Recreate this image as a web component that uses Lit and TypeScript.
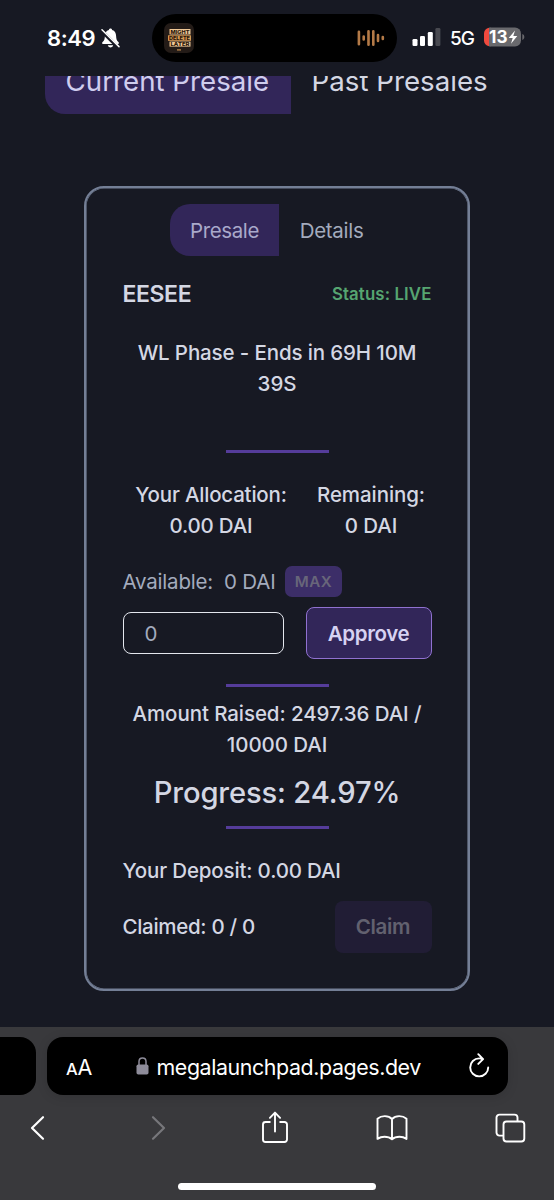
import { LitElement, html, css } from "lit";
import { customElement, property } from "lit/decorators.js";

@customElement("status-bar")
class StatusBar extends LitElement {
  static styles = css`
    :host { display: block; height: 76px; flex: none; color: #fff; }
    .bar { display: flex; height: 76px; padding: 0 29px 0 47px; box-sizing: border-box; }
    .time { width: 54px; padding-top: 24px; font-size: 22px; line-height: 28px; font-weight: 600; letter-spacing: -0.45px; white-space: nowrap; }
    .bell { margin-top: 28px; width: 19px; height: 20px; flex: none; }
    .island { margin: 14px 0 0 32px; width: 245px; height: 48px; border-radius: 24px; background: #000; display: flex; justify-content: space-between; align-items: center; padding: 0 12px; box-sizing: border-box; flex: none; }
    .signal { margin: 28px 0 0 15px; width: 29px; height: 18px; flex: none; }
    .net { margin: 24px 0 0 9px; width: 34px; font-size: 19px; line-height: 29px; font-weight: 500; letter-spacing: -0.9px; flex: none; }
    .battery { margin-top: 27px; width: 41px; height: 20px; flex: none; }
    svg { display: block; }
    .num { font: 700 17.500px Inter, sans-serif; }
    .art { font: 800 5.200px "Inter", sans-serif; }
  `;
  render() {
    return html`<div class="bar">
      <div class="time">8:49</div>
      <svg class="bell" viewBox="0 0 19 20">
        <path d="M9.5.6c-.9 0-1.500.6-1.600 1.300C5 2.700 4 5 3.900 8c-.1 3.300-.7 4.500-2.300 6-.9.9-.7 2 .5 2h14.800c1.200 0 1.400-1.100.5-2-1.600-1.500-2.200-2.700-2.300-6C15 5 14 2.700 11.100 1.900 11 1.200 10.400.6 9.500.6zM6.800 17.200c.3 1.400 1.400 2.200 2.700 2.200s2.400-.8 2.700-2.200z" fill="#fff"/>
        <path d="M0 2.200 17.200 19.400" stroke="#171923" stroke-width="3.600"/>
        <path d="M1 1.800 18 18.600" stroke="#fff" stroke-width="1.500" stroke-linecap="round"/>
      </svg>
      <div class="island">
        <svg width="30" height="30" viewBox="0 0 30 30">
          <rect width="30" height="30" rx="7" fill="#231b17"/>
          <g fill="#f0c896"><rect x="5.500" y="6" width="21" height="5.500"/><rect x="4" y="12.300" width="23" height="5.500" fill="#d79a55"/><rect x="5.500" y="18.600" width="21" height="5"/><rect x="13" y="26.300" width="4" height="1.200" fill="#c58d4f"/></g>
          <g class="art" fill="#2a1508"><text x="6.500" y="10.700" textLength="19" lengthAdjust="spacingAndGlyphs">MIGHT</text><text x="5" y="17" textLength="21" lengthAdjust="spacingAndGlyphs">DELETE</text><text x="6.500" y="23.300" textLength="19" lengthAdjust="spacingAndGlyphs">LATER</text></g>
        </svg>
        <svg width="28" height="18" viewBox="0 0 28 18" stroke="#b47a47" stroke-width="2.600" stroke-linecap="round">
          <path d="M1.900 2.800v12.400M6.700 7.500v3M11.500 2.300v13.400M16.300 2.300v13.400M21 6v6M25.800 8v2"/>
        </svg>
      </div>
      <svg class="signal" viewBox="0 0 29 18">
        <rect x=".5" y="11" width="5" height="7" rx="1.300" fill="#fff"/><rect x="8" y="8" width="5" height="10" rx="1.300" fill="#fff"/><rect x="15.800" y="4" width="5" height="14" rx="1.300" fill="#fff"/><rect x="23.400" y="0" width="5" height="18" rx="1.300" fill="#484950"/>
      </svg>
      <div class="net">5G</div>
      <svg class="battery" viewBox="0 0 41 20">
        <path d="M6.500.5H31a6 6 0 0 1 6 6v7a6 6 0 0 1-6 6H6.500z" fill="#69696d"/>
        <path d="M5 .7v18.600C2 18.700 0 16.500 0 13.500v-7C0 3.500 2 1.300 5 .7z" fill="#f04a3e"/>
        <path d="M5 .6h2v18.800H5z" fill="#69696d"/>
        <path d="M38.300 7c1.300.4 2 1.600 2 3s-.7 2.600-2 3z" fill="#69696d"/>
        <text class="num" x="5" y="16.400" fill="#fff" textLength="18.500" lengthAdjust="spacingAndGlyphs">13</text>
        <path d="M31 3.500 24.700 11h4l-1.700 5.800L33.300 9h-4z" fill="#fff"/>
      </svg>
    </div>`;
  }
}

@customElement("presale-card")
class PresaleCard extends LitElement {
  @property() deposit = "0.00 DAI";
  static styles = css`
    :host { display: block; width: 386px; height: 805px; box-sizing: border-box; border: 2px solid #747f96; box-shadow: inset 0 0 0 0.6px #747f96; border-radius: 20px; color: #d4d7e3; font-size: 20.5px; line-height: 31px; font-weight: 550; letter-spacing: -0.08px; }
    .inner { padding: 16px 36.500px 0; display: flex; flex-direction: column; }
    .tabs { display: flex; height: 52px; padding-left: 47px; font-weight: 400; line-height: 53px; color: #a3abbd; }
    .tab { width: 64px; padding-left: 20.600px; white-space: nowrap; letter-spacing: -0.3px; }
    .on { width: 89px; background: #322659; border-radius: 20px 0 0 20px; color: #a9a9cb; letter-spacing: -0.4px; }
    .head { display: flex; justify-content: space-between; align-items: center; height: 31px; margin-top: 22.500px; }
    .name { font-size: 23px; font-weight: 600; letter-spacing: -0.4px; }
    .live { font-size: 16.800px; font-weight: 600; color: #56a571; letter-spacing: 0.13px; }
    .phase { margin-top: 27px; text-align: center; white-space: nowrap; }
    .rule { width: 103px; height: 3px; background: #553c9a; align-self: center; }
    .r1 { margin-top: 51.500px; }
    .alloc { display: flex; margin-top: 26px; text-align: center; white-space: nowrap; }
    .a1 { width: 177px; flex: none; letter-spacing: -0.2px; }
    .a2 { width: 143px; flex: none; }
    .avail { display: flex; align-items: center; height: 31px; margin-top: 25px; font-weight: 400; color: #a3abbd; white-space: nowrap; letter-spacing: -0.2px; }
    .val { margin-left: 11px; }
    .max { margin-left: auto; margin-right: 89.500px; width: 57px; height: 31px; border-radius: 7px; background: #3c2e68; color: #68667a; font-size: 15.200px; font-weight: 600; text-align: center; letter-spacing: 0.5px; }
    .form { display: flex; justify-content: space-between; align-items: center; height: 52px; margin-top: 10px; }
    .field { width: 161px; height: 42px; box-sizing: border-box; border: 1.300px solid #e4e7ee; border-radius: 8px; padding-left: 21px; line-height: 41px; font-weight: 400; color: #a3abbd; }
    .btn { height: 52px; box-sizing: border-box; border-radius: 8px; text-align: center; font-weight: 600; background: #322659; letter-spacing: -0.35px; }
    .approve { width: 126px; border: 1.300px solid #9071d0; line-height: 51px; color: #d6d2f2; }
    .claim { width: 97px; line-height: 52px; background: #211d35; color: #62616f; }
    .r2 { margin-top: 25px; }
    .raised { margin-top: 11px; text-align: center; white-space: nowrap; }
    .progress { margin-top: 13px; height: 40px; line-height: 40px; font-size: 29.200px; letter-spacing: -0.15px; text-align: center; white-space: nowrap; }
    .r3 { margin-top: 13px; }
    .dep { margin-top: 26px; white-space: nowrap; letter-spacing: -0.16px; }
    .claims { margin-top: 14.500px; height: 52px; display: flex; justify-content: space-between; align-items: center; white-space: nowrap; }
    .cl { letter-spacing: -0.3px; }
    .l1 { letter-spacing: -0.13px; }
  `;
  render() {
    return html`<div class="inner">
      <div class="tabs"><div class="tab on">Presale</div><div class="tab">Details</div></div>
      <div class="head"><span class="name">EESEE</span><span class="live">Status: LIVE</span></div>
      <div class="phase"><span class="l1">WL Phase - Ends in 69H 10M</span><br>39S</div>
      <div class="rule r1"></div>
      <div class="alloc"><div class="a1">Your Allocation:<br>0.00 DAI</div><div class="a2">Remaining:<br>0 DAI</div></div>
      <div class="avail"><span>Available:</span><span class="val">0 DAI</span><span class="max">MAX</span></div>
      <div class="form"><div class="field">0</div><div class="btn approve">Approve</div></div>
      <div class="rule r2"></div>
      <div class="raised">Amount Raised: 2497.36 DAI /<br>10000 DAI</div>
      <div class="progress">Progress: 24.97%</div>
      <div class="rule r3"></div>
      <div class="dep">Your Deposit: ${this.deposit}</div>
      <div class="claims"><span class="cl">Claimed: 0 / 0</span><div class="btn claim">Claim</div></div>
    </div>`;
  }
}

@customElement("browser-chrome")
class BrowserChrome extends LitElement {
  static styles = css`
    :host { display: block; height: 173px; background: #39393c; color: #fff; flex: none; overflow: hidden; }
    .row { display: flex; gap: 10.500px; padding-top: 10px; }
    .prev { width: 36px; height: 58px; border-radius: 0 16px 16px 0; background: #000; }
    .url { width: 461px; height: 58px; box-sizing: border-box; border-radius: 16px; background: #000; display: flex; align-items: center; padding: 0 18px 0 19.500px; box-shadow: 0 2px 12px rgba(0,0,0,.12); }
    .aa { width: 69.500px; font-size: 21.500px; line-height: 30px; padding-top: 3px; letter-spacing: -0.2px; }
    .small { font-size: 16.500px; font-weight: 500; }
    .host { margin-left: 8px; padding-top: 2px; font-size: 21.400px; line-height: 30px; letter-spacing: -0.41px; white-space: nowrap; flex: 1; }
    .tools { display: flex; height: 34px; margin-top: 15px; padding-left: 30px; }
    .fwd { margin-left: 105px; } .share { margin-left: 93.500px; } .book { margin-left: 88.500px; } .pages { margin-left: 87px; }
    .home { width: 198px; height: 7px; border-radius: 4px; background: #fff; margin: 39px auto 0 178px; }
    svg { display: block; flex: none; fill: none; stroke: #fff; stroke-width: 1.900; stroke-linecap: round; stroke-linejoin: round; }
    .lock { fill: #8e8c9a; stroke: none; }
    .dim { stroke: #77777b; }
  `;
  render() {
    return html`
      <div class="row">
        <div class="prev"></div>
        <div class="url">
          <div class="aa"><span class="small">A</span>A</div>
          <svg width="13" height="18" viewBox="0 0 13 18"><rect class="lock" x=".5" y="7.500" width="12" height="10" rx="1.800"/><path d="M3 8V4.500C3 2.300 4.500 1 6.500 1S10 2.300 10 4.500V8" stroke="#8e8c9a" stroke-width="1.500"/></svg>
          <span class="host">megalaunchpad.pages.dev</span>
          <svg width="22" height="26" viewBox="0 0 22 26"><path d="M14.600 6.200C13.500 5.700 12.400 5.400 11.200 5.400a9 9 0 1 0 9 9M10.300 1.200l4.800 4.900-4.800 4.800"/></svg>
        </div>
      </div>
      <div class="tools">
        <svg width="16" height="34" viewBox="0 0 16 34"><path d="M13 7.200 2 18l11 10.700" stroke-width="2.200"/></svg>
        <svg class="dim fwd" width="16" height="34" viewBox="0 0 16 34"><path d="M2 7.200 13 18 2 28.700" stroke-width="2.200"/></svg>
        <svg class="share" width="27" height="34" viewBox="0 0 27 34"><path d="M8.800 12H4.500A2.500 2.500 0 0 0 2 14.500v15A2.500 2.500 0 0 0 4.500 32h19a2.500 2.500 0 0 0 2.500-2.500v-15a2.500 2.500 0 0 0-2.500-2.500h-4.300M14 21.500V3M8.900 7.800 14 2.600l5.100 5.200"/></svg>
        <svg class="book" width="32" height="34" viewBox="0 0 32 34"><path d="M16 9C14.200 7 11.800 6.100 8.800 6.100 6 6.100 3.500 6.900 1.500 8.700v20.200c2-1.400 4.200-2.200 7-2.200 3.200 0 5.500.8 7.500 2.600 2-1.800 4.300-2.600 7.500-2.600 2.800 0 5 .8 7 2.200V8.700c-2-1.800-4.500-2.600-7.300-2.600C20.200 6.100 17.800 7 16 9zM16 9v20"/></svg>
        <svg class="pages" width="31" height="34" viewBox="0 0 31 34"><path d="M8 25.600H4.500A3 3 0 0 1 1.500 22.600V7.600a3 3 0 0 1 3-3h15a3 3 0 0 1 3 3v3.200"/><rect x="8.500" y="11.500" width="20.800" height="20" rx="3"/></svg>
      </div>
      <div class="home"></div>`;
  }
}

@customElement("app-root")
class AppRoot extends LitElement {
  static styles = css`
    :host { display: flex; flex-direction: column; width: 554px; height: 1200px; overflow: hidden; background: #171923; font-family: Inter, sans-serif; }
    .page { flex: 1; overflow: hidden; }
    .top { display: flex; height: 38px; overflow: hidden; margin-left: 45px; align-items: flex-end; font-size: 27.700px; line-height: 66px; color: #d4d7e3; white-space: nowrap; }
    .tab { height: 66px; box-sizing: border-box; padding-left: 20.600px; }
    .on { width: 246px; background: #322659; border-radius: 20px 0 0 20px; color: #d0cdee; }
    .card { margin: 72px 0 0 84px; }
  `;
  render() {
    return html`
      <status-bar></status-bar>
      <div class="page">
        <div class="top"><div class="tab on">Current Presale</div><div class="tab">Past Presales</div></div>
        <presale-card class="card"></presale-card>
      </div>
      <browser-chrome></browser-chrome>`;
  }
}
